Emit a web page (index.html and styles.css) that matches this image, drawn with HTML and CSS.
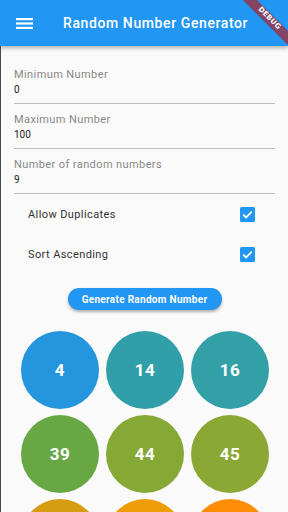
FILE: index.html
```html
<!DOCTYPE html>
<html lang="en">
<head>
    <meta charset="UTF-8">
    <meta name="viewport" content="width=device-width, initial-scale=1.0">
    <title>Random Number Generator</title>
    <link rel="stylesheet" href="styles.css">
</head>
<body>
    <div class="screen">
        <header class="appBar">
            <svg class="menuIcon" width="17" height="11" viewBox="0 0 17 11">
                <rect x="0" y="0" width="17" height="2.2" fill="#fff"/>
                <rect x="0" y="4.4" width="17" height="2.2" fill="#fff"/>
                <rect x="0" y="8.8" width="17" height="2.2" fill="#fff"/>
            </svg>
            <h1 class="title">Random Number Generator</h1>
            <div class="debugBanner">DEBUG</div>
        </header>

        <main class="content">
            <div class="field">
                <label>Minimum Number</label>
                <div class="value">0</div>
            </div>
            <div class="field">
                <label>Maximum Number</label>
                <div class="value">100</div>
            </div>
            <div class="field">
                <label>Number of random numbers</label>
                <div class="value">9</div>
            </div>

            <div class="option">
                <span>Allow Duplicates</span>
                <span class="checkbox">
                    <svg width="15" height="15" viewBox="0 0 15 15"><path d="M3.2 7.6 L6.1 10.4 L11.8 4.6" fill="none" stroke="#fff" stroke-width="1.8"/></svg>
                </span>
            </div>
            <div class="option">
                <span>Sort Ascending</span>
                <span class="checkbox">
                    <svg width="15" height="15" viewBox="0 0 15 15"><path d="M3.2 7.6 L6.1 10.4 L11.8 4.6" fill="none" stroke="#fff" stroke-width="1.8"/></svg>
                </span>
            </div>

            <div class="buttonRow">
                <button class="generate">Generate Random Number</button>
            </div>

            <div class="balls">
                <div class="ball" style="background-color: #2596de;">4</div>
                <div class="ball" style="background-color: #309fa9;">14</div>
                <div class="ball" style="background-color: #32a0a6;">16</div>
                <div class="ball" style="background-color: #67a844;">39</div>
                <div class="ball" style="background-color: #86a834;">44</div>
                <div class="ball" style="background-color: #8ba734;">45</div>
                <!-- third row runs past the bottom of the screen -->
                <div class="ball" style="background-color: #d69c12;"></div>
                <div class="ball" style="background-color: #ee9d06;"></div>
                <div class="ball" style="background-color: #ff8d06;"></div>
            </div>
        </main>
    </div>
</body>
</html>
```

FILE: styles.css
```css
* {
  box-sizing: border-box;
  margin: 0;
  padding: 0;
}

html, body {
  width: 288px;
  height: 512px;
  overflow: hidden;
}

body {
  background-color: #fafafa;
  font-family: "Roboto", "Noto Sans", sans-serif;
  -webkit-font-smoothing: antialiased;
}

.screen {
  position: relative;
  height: 512px;
  overflow: hidden;
}

.appBar {
  position: relative;
  z-index: 2;
  height: 46px;
  display: flex;
  align-items: center;
  padding-left: 16px;
  background-color: #2196f3;
  box-shadow: 0 2px 4px rgba(0, 0, 0, 0.3);
}

.menuIcon {
  display: block;
  flex: none;
}

.title {
  margin-left: 30px;
  color: #fff;
  font-size: 14px;
  font-weight: 500;
  letter-spacing: 0.6px;
  white-space: nowrap;
}

.debugBanner {
  position: absolute;
  top: 14.4px;
  left: 236.8px;
  width: 64px;
  height: 9.6px;
  transform: rotate(45deg);
  background-color: rgba(183, 28, 28, 0.66);
  color: #fff;
  font-family: "DejaVu Sans", sans-serif;
  font-size: 7px;
  font-weight: bold;
  line-height: 9.6px;
  text-align: center;
  letter-spacing: 0.3px;
}

.content {
  border-left: 1px solid #4a4a4a;
  height: 466px;
  padding: 13px 13px 0 13px;
}

.field {
  padding: 9px 0 5px 0;
  border-bottom: 1px solid #bdbdbd;
}

.field label {
  display: block;
  height: 14px;
  line-height: 14px;
  color: #888;
  font-size: 11px;
  letter-spacing: 0.4px;
}

.field .value {
  height: 16px;
  line-height: 16px;
  color: #222;
  font-size: 10px;
}

.option {
  height: 40px;
  display: flex;
  align-items: center;
  justify-content: space-between;
  padding: 0 20px 0 14px;
  color: #333;
  font-size: 11px;
  letter-spacing: 0.4px;
}

.checkbox {
  width: 15px;
  height: 15px;
  border-radius: 1.5px;
  background-color: #2196f3;
}

.checkbox svg {
  display: block;
}

.buttonRow {
  display: flex;
  justify-content: center;
  margin-top: 14px;
}

.generate {
  width: 154px;
  height: 22px;
  border: none;
  border-radius: 11px;
  background-color: #2196f3;
  color: #fff;
  font-family: "Roboto", "Noto Sans", sans-serif;
  font-size: 10px;
  font-weight: bold;
  letter-spacing: 0.3px;
  box-shadow: 0 2px 3px rgba(0, 0, 0, 0.3);
}

.balls {
  display: grid;
  grid-template-columns: repeat(3, 78px);
  column-gap: 7px;
  row-gap: 6px;
  justify-content: center;
  margin-top: 21px;
  padding-left: 1px;
}

.ball {
  width: 78px;
  height: 78px;
  border-radius: 50%;
  display: flex;
  align-items: center;
  justify-content: center;
  color: #fff;
  font-size: 17px;
  font-weight: bold;
  letter-spacing: 0.5px;
}
```
